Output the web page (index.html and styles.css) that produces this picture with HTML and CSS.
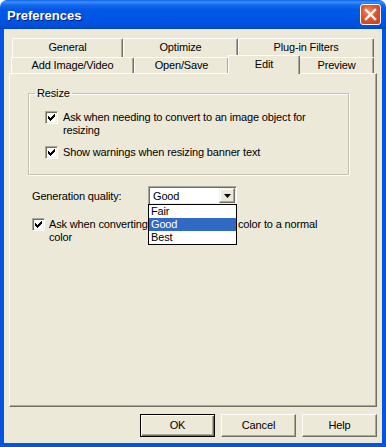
FILE: index.html
```html
<!DOCTYPE html>
<html lang="en">
  <head>
    <meta charset="UTF-8" />
    <title>Preferences</title>
    <link rel="stylesheet" href="styles.css">
  </head>
  <body>
    <div class="window">
      <div class="titlebar">
        <span class="title">Preferences</span>
        <button class="close">
          <svg width="19" height="19" viewBox="0 0 19 19">
            <path d="M5 5L14 14M14 5L5 14" stroke="#fff" stroke-width="2.4" stroke-linecap="square" />
          </svg>
        </button>
      </div>

      <div class="client">
        <div class="tabs">
          <div class="tab-row back">
            <div class="tab t-general">General</div>
            <div class="tab t-optimize">Optimize</div>
            <div class="tab t-plugins">Plug-in Filters</div>
          </div>
          <div class="tab-row front">
            <div class="tab t-add">Add Image/Video</div>
            <div class="tab t-open">Open/Save</div>
            <div class="tab t-edit active">Edit</div>
            <div class="tab t-preview">Preview</div>
          </div>
        </div>

        <div class="panel">
          <fieldset class="group">
            <legend>Resize</legend>
            <div class="group-body">
              <label class="check">
                <span class="box"><svg width="11" height="11" viewBox="0 0 11 11"><path d="M2 4h1v3H2zM3 5h1v3H3zM4 6h1v3H4zM5 5h1v3H5zM6 4h1v3H6zM7 3h1v3H7zM8 2h1v3H8z" fill="#000" /></svg></span>
                <span>Ask when needing to convert to an image object for<br>resizing</span>
              </label>
              <label class="check second">
                <span class="box"><svg width="11" height="11" viewBox="0 0 11 11"><path d="M2 4h1v3H2zM3 5h1v3H3zM4 6h1v3H4zM5 5h1v3H5zM6 4h1v3H6zM7 3h1v3H7zM8 2h1v3H8z" fill="#000" /></svg></span>
                <span>Show warnings when resizing banner text</span>
              </label>
            </div>
          </fieldset>

          <div class="field-row">
            <span class="field-label">Generation quality:</span>
            <div class="combo">
              <span class="combo-value">Good</span>
              <span class="combo-btn">
                <svg width="7" height="4" viewBox="0 0 7 4"><path d="M0 0h7L3.5 4z" fill="#000" /></svg>
              </span>
              <ul class="combo-list">
                <li>Fair</li>
                <li class="selected">Good</li>
                <li>Best</li>
              </ul>
            </div>
          </div>

          <label class="check convert">
            <span class="box"><svg width="11" height="11" viewBox="0 0 11 11"><path d="M2 4h1v3H2zM3 5h1v3H3zM4 6h1v3H4zM5 5h1v3H5zM6 4h1v3H6zM7 3h1v3H7zM8 2h1v3H8z" fill="#000" /></svg></span>
            <span>Ask when converting an indexed image color to a normal<br>color</span>
          </label>
        </div>

        <div class="buttons">
          <button class="btn default">OK</button>
          <button class="btn">Cancel</button>
          <button class="btn">Help</button>
        </div>
      </div>
    </div>
  </body>
</html>
```

FILE: styles.css
```css
html,
body {
  margin: 0;
  padding: 0;
}
body {
  width: 386px;
  height: 447px;
  background: #fff;
  font-family: "Liberation Sans", Arial, sans-serif;
  font-size: 11px;
  letter-spacing: -0.15px;
  color: #000;
}
.window {
  height: 447px;
  display: flex;
  flex-direction: column;
}

/* title bar */
.titlebar {
  height: 29px;
  flex: none;
  box-sizing: border-box;
  display: flex;
  align-items: center;
  justify-content: space-between;
  padding: 0 5px 0 7px;
  border-radius: 7px 7px 0 0;
  background: linear-gradient(#0a5fea 0, #3c8ff8 2px, #1568ee 5px, #0058e6 10px, #0054e3 20px, #0050da 26px, #0044c2 29px);
}
.title {
  color: #fff;
  font-weight: bold;
  font-size: 13px;
  letter-spacing: 0;
  text-shadow: 1px 1px #0a1883;
  padding-top: 1px;
}
.close {
  all: unset;
  width: 21px;
  height: 21px;
  box-sizing: border-box;
  border: 1px solid #fff;
  border-radius: 3px;
  background: radial-gradient(circle at 40% 35%, #f08a6a 0, #e0532e 45%, #c23c18 100%);
  display: flex;
  align-items: center;
  justify-content: center;
}

/* dialog body */
.client {
  flex: 1;
  display: flex;
  flex-direction: column;
  background: #ece9d8;
  border: 4px solid #0553e1;
  border-top: 0;
  padding: 9px 5px 6px;
}

.tab-row {
  display: flex;
}
.tab-row.back {
  margin-left: 3px;
}
.tab-row.front {
  margin-left: 2px;
}
.tab {
  box-sizing: border-box;
  text-align: center;
  background: #ece9d8;
  border-left: 1px solid #fff;
  border-top: 1px solid #fff;
  border-right: 1px solid #716f64;
  box-shadow: inset -1px 0 #aca899;
  border-radius: 2px 2px 0 0;
}
.back .tab {
  height: 19px;
  line-height: 17px;
}
.front .tab {
  height: 16px;
  line-height: 15px;
}
.t-general { width: 111px; }
.t-optimize { width: 115px; }
.t-plugins { width: 136px; }
.t-add { width: 123px; }
.t-open { width: 95px; }
.t-edit { width: 70px; }
.t-preview { width: 75px; }
.front .tab.active {
  position: relative;
  z-index: 1;
  width: 72px;
  height: 19px;
  line-height: 16px;
  margin: -2px -1px -1px;
}

.panel {
  height: 334px;
  box-sizing: border-box;
  border: 1px solid;
  border-color: #fff #716f64 #716f64 #fff;
  box-shadow: inset -1px -1px #aca899;
  padding: 13px 18px 0;
}

.group {
  margin: 0;
  padding: 0;
  width: 321px;
  box-sizing: border-box;
  border: 1px solid #c5c2b2;
  box-shadow: inset 1px 1px #fff, 1px 1px #fff;
}
.group legend {
  margin-left: 6px;
  padding: 0 2px;
  line-height: 13px;
}
.group-body {
  padding: 11px 16px 15px;
}

.check {
  display: flex;
  gap: 5px;
  line-height: 13px;
}
.check.second {
  margin-top: 9px;
}
.box {
  flex: none;
  width: 13px;
  height: 13px;
  box-sizing: border-box;
  border: 1px solid;
  border-color: #aca899 #fff #fff #aca899;
  box-shadow: inset 1px 1px #716f64, inset -1px -1px #f1efe2;
  background: #fff;
}
.box svg {
  display: block;
}

.field-row {
  display: flex;
  align-items: center;
  margin: 11px 0 0 4px;
}
.field-label {
  width: 116px;
}
.combo {
  position: relative;
  width: 89px;
  height: 19px;
  box-sizing: border-box;
  border: 1px solid;
  border-color: #aca899 #fff #fff #aca899;
  box-shadow: inset 1px 1px #716f64, inset -1px -1px #f1efe2;
  background: #fff;
  display: flex;
  align-items: center;
  justify-content: space-between;
  padding: 1px;
}
.combo-value {
  padding-left: 3px;
}
.combo-btn {
  width: 16px;
  height: 15px;
  box-sizing: border-box;
  background: #ece9d8;
  border: 1px solid;
  border-color: #f1efe2 #716f64 #716f64 #f1efe2;
  box-shadow: inset -1px -1px #aca899, inset 1px 1px #fff;
  display: flex;
  align-items: center;
  justify-content: center;
}
.combo-list {
  position: absolute;
  top: 17px;
  left: -1px;
  width: 89px;
  box-sizing: border-box;
  margin: 0;
  padding: 0;
  list-style: none;
  background: #fff;
  border: 1px solid #000;
  z-index: 2;
}
.combo-list li {
  height: 13px;
  line-height: 13px;
  padding-left: 2px;
}
.combo-list li.selected {
  background: #316ac5;
  color: #fff;
}

.check.convert {
  margin: 13px 0 0 4px;
  gap: 4px;
}

.buttons {
  display: flex;
  justify-content: flex-end;
  gap: 6px;
  margin-top: 7px;
}
.btn {
  all: unset;
  width: 75px;
  height: 23px;
  box-sizing: border-box;
  text-align: center;
  line-height: 21px;
  background: #ece9d8;
  border: 1px solid;
  border-color: #fff #716f64 #716f64 #fff;
  box-shadow: inset -1px -1px #aca899;
}
.btn.default {
  border: 1px solid #000;
  box-shadow: inset 1px 1px #fff, inset -1px -1px #716f64, inset -2px -2px #aca899;
}
```
